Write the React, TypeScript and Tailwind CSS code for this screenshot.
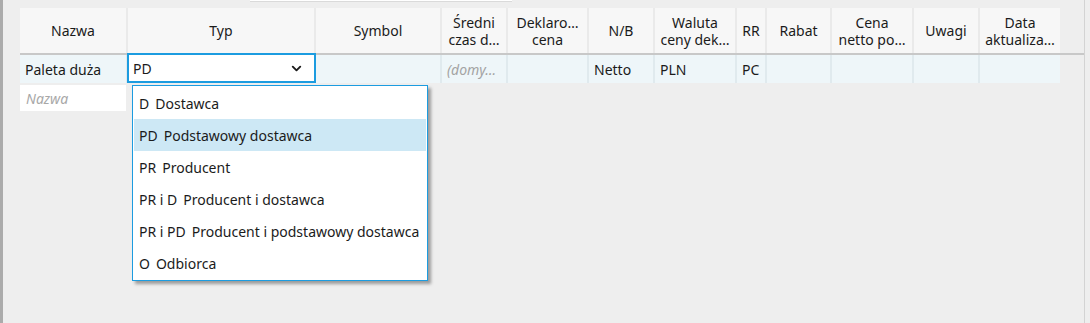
import { ChevronDown } from "lucide-react";

const font = { fontFamily: '"Noto Sans", "Open Sans", sans-serif' };

// width of each column incl. its 2px separator
const columns = [
  { key: "nazwa", w: "w-[108px]", head: ["Nazwa"] },
  { key: "typ", w: "w-[188px]", head: ["Typ"] },
  { key: "symbol", w: "w-[126px]", head: ["Symbol"] },
  { key: "sredni", w: "w-[66px]", head: ["Średni", "czas d…"] },
  { key: "deklaro", w: "w-[81px]", head: ["Deklaro…", "cena"] },
  { key: "nb", w: "w-[66px]", head: ["N/B"] },
  { key: "waluta", w: "w-[82px]", head: ["Waluta", "ceny dek…"] },
  { key: "rr", w: "w-[30px]", head: ["RR"] },
  { key: "rabat", w: "w-[65px]", head: ["Rabat"] },
  { key: "cena", w: "w-[82px]", head: ["Cena", "netto po…"] },
  { key: "uwagi", w: "w-[66px]", head: ["Uwagi"] },
  { key: "data", w: "w-[80px]", head: ["Data", "aktualiza…"] },
];

const options = [
  { code: "D", name: "Dostawca" },
  { code: "PD", name: "Podstawowy dostawca", active: true },
  { code: "PR", name: "Producent" },
  { code: "PR i D", name: "Producent i dostawca" },
  { code: "PR i PD", name: "Producent i podstawowy dostawca" },
  { code: "O", name: "Odbiorca" },
];

const rowValues: Record<string, { text: string; muted?: boolean }> = {
  nazwa: { text: "Paleta duża" },
  sredni: { text: "(domy…", muted: true },
  nb: { text: "Netto" },
  waluta: { text: "PLN" },
  rr: { text: "PC" },
};

export default function App() {
  return (
    <div
      className="relative flex w-[1090px] h-[323px] overflow-hidden bg-[#eeeeee] text-[#1b1b1b]"
      style={font}
    >
      {/* window behind, left edge */}
      <div className="w-[3px] shrink-0 bg-[#ababab]" />

      {/* piece of another control at the top */}
      <div className="absolute left-[250px] top-0 w-[262px] h-[2px] bg-white border-b border-[#dadada]" />

      <div className="w-[1081px] shrink-0 pl-[17px] pt-[8px]">
        {/* header */}
        <div className="flex h-[47px] border-b-2 border-[#c8c8c8]">
          {columns.map((c) => (
            <div
              key={c.key}
              className={`${c.w} shrink-0 flex flex-col items-center justify-center bg-[#f7f7f7] border-r-2 border-[#eaeaea] last:border-r-0 text-[14px] leading-[17px] text-center whitespace-nowrap`}
            >
              {c.head.map((l) => (
                <span key={l}>{l}</span>
              ))}
            </div>
          ))}
        </div>

        {/* data row */}
        <div className="flex h-[28px]">
          {columns.map((c) => {
            if (c.key === "typ") {
              return (
                <div key={c.key} className={`${c.w} shrink-0 relative`}>
                  <div className="-mt-[2px] -ml-[1px] h-[30px] flex items-center justify-between bg-white border-2 border-[#1c9ce0] pl-[4px] pr-[10px] text-[14px]">
                    <span>PD</span>
                    <ChevronDown size={15} strokeWidth={3} className="text-[#1b1b1b]" />
                  </div>

                  {/* dropdown list */}
                  <div className="absolute left-[4px] top-[30px] z-10 w-[296px] bg-white border border-[#1c9ce0] p-[1px] shadow-[3px_3px_3px_rgba(0,0,0,0.35)]">
                    {options.map((o) => (
                      <div
                        key={o.code}
                        className={`h-[32px] flex items-center px-[5px] text-[14px] whitespace-nowrap ${
                          o.active ? "bg-[#cde8f5]" : ""
                        }`}
                      >
                        <span className="mr-[6px]">{o.code}</span>
                        <span>{o.name}</span>
                      </div>
                    ))}
                  </div>
                </div>
              );
            }
            const v = rowValues[c.key];
            return (
              <div
                key={c.key}
                className={`${c.w} shrink-0 flex items-center bg-[#eef6f9] border-r-2 border-[#e0eaee] last:border-r-0 px-[5px] text-[14px] whitespace-nowrap`}
              >
                {v && (
                  <span className={v.muted ? "italic text-[#a3a3a3]" : ""}>{v.text}</span>
                )}
              </div>
            );
          })}
        </div>

        {/* new row placeholder */}
        <div className="mt-[2px] w-[106px] h-[26px] flex items-center bg-white px-[6px] text-[14px] italic text-[#a8a8a8]">
          Nazwa
        </div>
      </div>

      {/* right edge of the panel */}
      <div className="w-px shrink-0 bg-[#d3d3d3]" />
    </div>
  );
}
